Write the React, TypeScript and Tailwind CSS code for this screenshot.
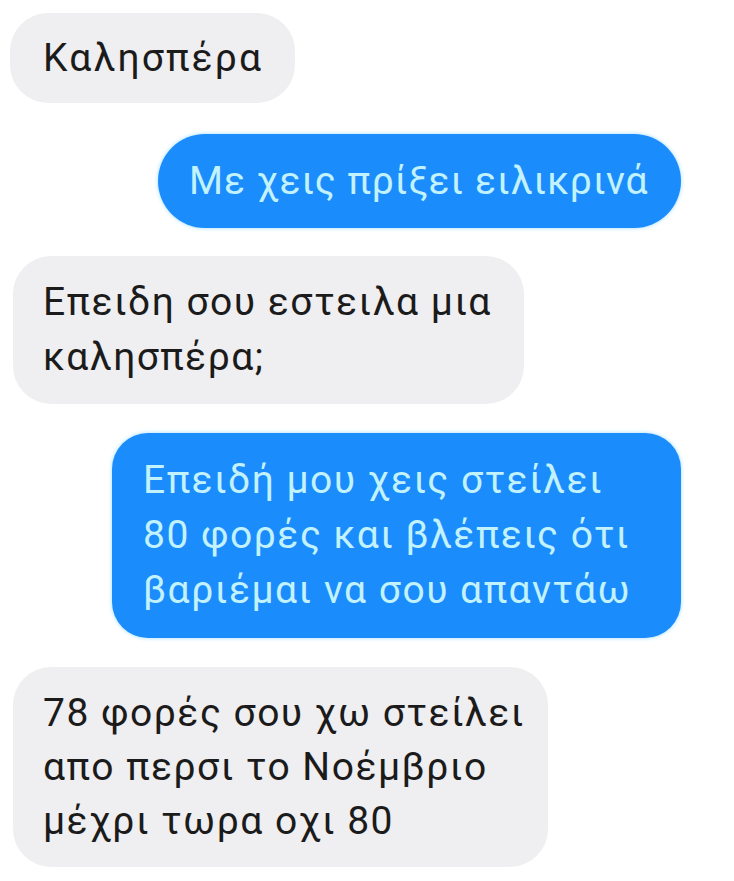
import React from "react";

function Gray({ lines, className = "" }: { lines: string[]; className?: string }) {
  return (
    <div
      className={`self-start rounded-[38px] bg-[#efeef0] pl-[30px] text-[#1b1b1b] whitespace-nowrap ${className}`}
    >
      {lines.map((l, i) => (
        <div key={i}>{l}</div>
      ))}
    </div>
  );
}

function Blue({ lines, className = "" }: { lines: string[]; className?: string }) {
  return (
    <div
      className={`self-end mr-[40px] bg-[#1b8cfb] pl-[31px] text-[#c2f2fd] whitespace-nowrap shadow-[0_0_4px_#9fdcff] ${className}`}
    >
      {lines.map((l, i) => (
        <div key={i}>{l}</div>
      ))}
    </div>
  );
}

export default function App() {
  return (
    <div
      className="w-[734px] h-[881px] bg-white flex flex-col gap-[29px] px-[13px] pt-[13px] overflow-hidden text-[39px] leading-[55px] tracking-[1.5px]"
      style={{ fontFamily: "Roboto, 'Noto Sans', sans-serif" }}
    >
      <Gray lines={["Καλησπέρα"]} className="w-[285px] py-[17.5px] -ml-[3px] pl-[33px] tracking-[2.2px]" />
      <Blue lines={["Με χεις πρίξει ειλικρινά"]} className="w-[523px] mt-[2px] rounded-full py-[19.5px] tracking-[1px]" />
      <Gray lines={["Επειδη σου εστειλα μια", "καλησπέρα;"]} className="w-[511px] -mt-[1px] py-[19px]" />
      <Blue
        lines={["Επειδή μου χεις στείλει", "80 φορές και βλέπεις ότι", "βαριέμαι να σου απαντάω"]}
        className="w-[569px] rounded-[36px] py-[20px]"
      />
      <Gray
        lines={["78 φορές σου χω στείλει", "απο περσι το Νοέμβριο", "μέχρι τωρα οχι 80"]}
        className="w-[535px] py-[19px] leading-[54px]"
      />
    </div>
  );
}
